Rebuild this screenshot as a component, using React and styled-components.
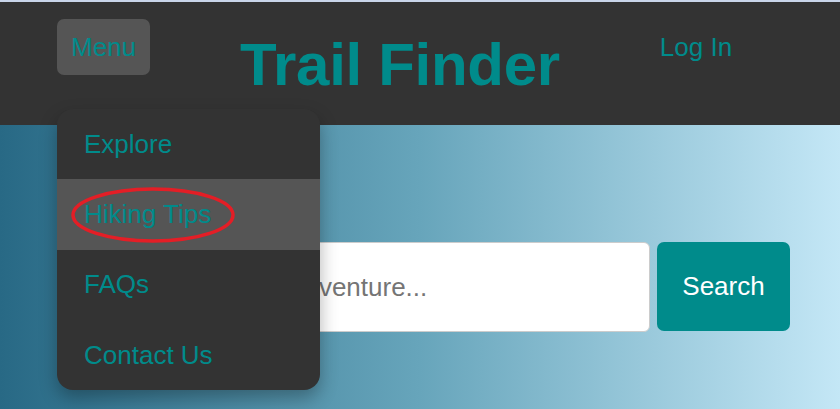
import React from "react";
import styled, { createGlobalStyle } from "styled-components";

const GlobalStyle = createGlobalStyle`
  html, body {
    margin: 0;
    padding: 0;
    height: 100%;
    overflow: hidden;
  }
  body {
    font-family: "Liberation Sans", Arial, sans-serif;
    background: #c3e6f5;
  }
`;

const menuItems = ["Explore", "Hiking Tips", "FAQs", "Contact Us"];

const App = () => {
  return (
    <Page>
      <GlobalStyle />
      <Header>
        <MenuWrap>
          <MenuButton>Menu</MenuButton>
          <Dropdown>
            {menuItems.map((item) => (
              <DropItem key={item} $active={item === "Hiking Tips"}>
                {item}
                {item === "Hiking Tips" && (
                  <Circle viewBox="0 0 168 60" aria-hidden="true">
                    <ellipse
                      cx="84"
                      cy="30"
                      rx="80"
                      ry="26"
                      fill="none"
                      stroke="#e41e26"
                      strokeWidth="3.5"
                    />
                  </Circle>
                )}
              </DropItem>
            ))}
          </Dropdown>
        </MenuWrap>
        <Title>Trail Finder</Title>
        <LoginLink>Log In</LoginLink>
      </Header>
      <Hero>
        <SearchForm>
          <SearchInput placeholder="Find your next adventure..." />
          <SearchButton>Search</SearchButton>
        </SearchForm>
      </Hero>
    </Page>
  );
};

const Page = styled.div`
  display: flex;
  flex-direction: column;
  height: 409px;
`;

const Header = styled.header`
  display: flex;
  align-items: flex-start;
  height: 125px;
  padding: 17px 0 0 57px;
  box-sizing: border-box;
  background-color: #333;
  border-top: 2px solid #c9d5ea;
  flex-shrink: 0;
  position: relative;
  z-index: 2;
`;

const MenuWrap = styled.div`
  position: relative;
`;

const MenuButton = styled.button`
  width: 93px;
  height: 56px;
  border: none;
  border-radius: 7px;
  background-color: #555;
  color: #008b8b;
  font-family: "Liberation Sans", Arial, sans-serif;
  font-size: 26px;
  padding: 0;
  cursor: pointer;
`;

const Dropdown = styled.div`
  position: absolute;
  top: 90px;
  left: 0;
  width: 263px;
  background-color: #333;
  border-radius: 16px;
  overflow: hidden;
  box-shadow: 0 8px 18px rgba(0, 0, 0, 0.3);
`;

const DropItem = styled.div`
  position: relative;
  height: 70.3px;
  display: flex;
  align-items: center;
  padding-left: 27px;
  font-size: 26px;
  color: #008b8b;
  background-color: ${(p) => (p.$active ? "#555" : "transparent")};
`;

const Circle = styled.svg`
  position: absolute;
  left: 12px;
  top: 6px;
  width: 168px;
  height: 60px;
  overflow: visible;
`;

const Title = styled.h1`
  margin: 16px 0 0 90px;
  font-size: 60px;
  font-weight: bold;
  line-height: 1;
  color: #008b8b;
  letter-spacing: -0.3px;
`;

const LoginLink = styled.a`
  margin: 13px 0 0 100px;
  font-size: 26px;
  color: #008b8b;
  cursor: pointer;
`;

const Hero = styled.main`
  flex: 1;
  display: flex;
  justify-content: flex-end;
  padding: 117px 50px 0 0;
  background: linear-gradient(to right, #286985, #67a5bb 50%, #c4e7f6);
`;

const SearchForm = styled.form`
  display: flex;
  align-items: flex-start;
  gap: 7px;
`;

const SearchInput = styled.input`
  width: 550px;
  height: 90px;
  box-sizing: border-box;
  padding: 0 17px;
  border: 1px solid #ccc;
  border-radius: 6px;
  background: #fff;
  font-family: "Liberation Sans", Arial, sans-serif;
  font-size: 26px;
  color: #333;
  &::placeholder {
    color: #757575;
  }
`;

const SearchButton = styled.button`
  width: 133px;
  height: 89px;
  border: none;
  border-radius: 7px;
  background-color: #008b8b;
  color: #fff;
  font-family: "Liberation Sans", Arial, sans-serif;
  font-size: 26px;
  cursor: pointer;
`;

export default App;
